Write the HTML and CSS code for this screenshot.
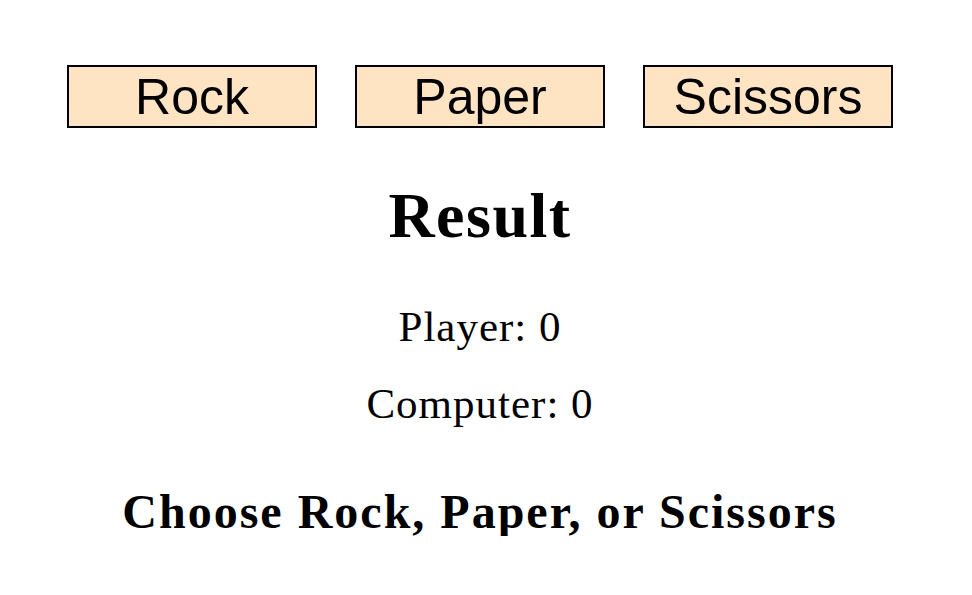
FILE: index.html
```html
<!DOCTYPE html>
<html>
<head>
<meta charset="utf-8">
<link rel="stylesheet" href="styles.css">
</head>
<body>
<div class="page">
  <div class="buttons">
    <button class="choice">Rock</button>
    <button class="choice">Paper</button>
    <button class="choice">Scissors</button>
  </div>
  <h1 class="result">Result</h1>
  <p class="score">Player: 0</p>
  <p class="score">Computer: 0</p>
  <h2 class="message">Choose Rock, Paper, or Scissors</h2>
</div>
</body>
</html>
```
FILE: styles.css
```css
html, body {
  margin: 0;
  padding: 0;
  background: #fff;
}
.page {
  width: 960px;
  padding-top: 65px;
  display: flex;
  flex-direction: column;
  align-items: center;
  font-family: "Liberation Serif", serif;
  color: #000;
}
.buttons {
  display: flex;
  gap: 38px;
}
.choice {
  box-sizing: border-box;
  width: 250px;
  height: 63px;
  margin: 0;
  padding: 0;
  border: 2px solid #000;
  background: #ffe4c4;
  font-family: "Liberation Sans", Arial, sans-serif;
  font-size: 50px;
  line-height: 1;
  color: #000;
}
.result {
  margin: 56px 0 0;
  font-size: 64px;
  line-height: 64px;
  font-weight: bold;
  letter-spacing: 1.5px;
}
.score {
  margin: 0;
  font-size: 43px;
  line-height: 77px;
  letter-spacing: 1px;
}
.score:first-of-type {
  margin-top: 40px;
}
.message {
  margin: 46px 0 0;
  font-size: 48px;
  line-height: 48px;
  font-weight: bold;
  letter-spacing: 2px;
}
```
